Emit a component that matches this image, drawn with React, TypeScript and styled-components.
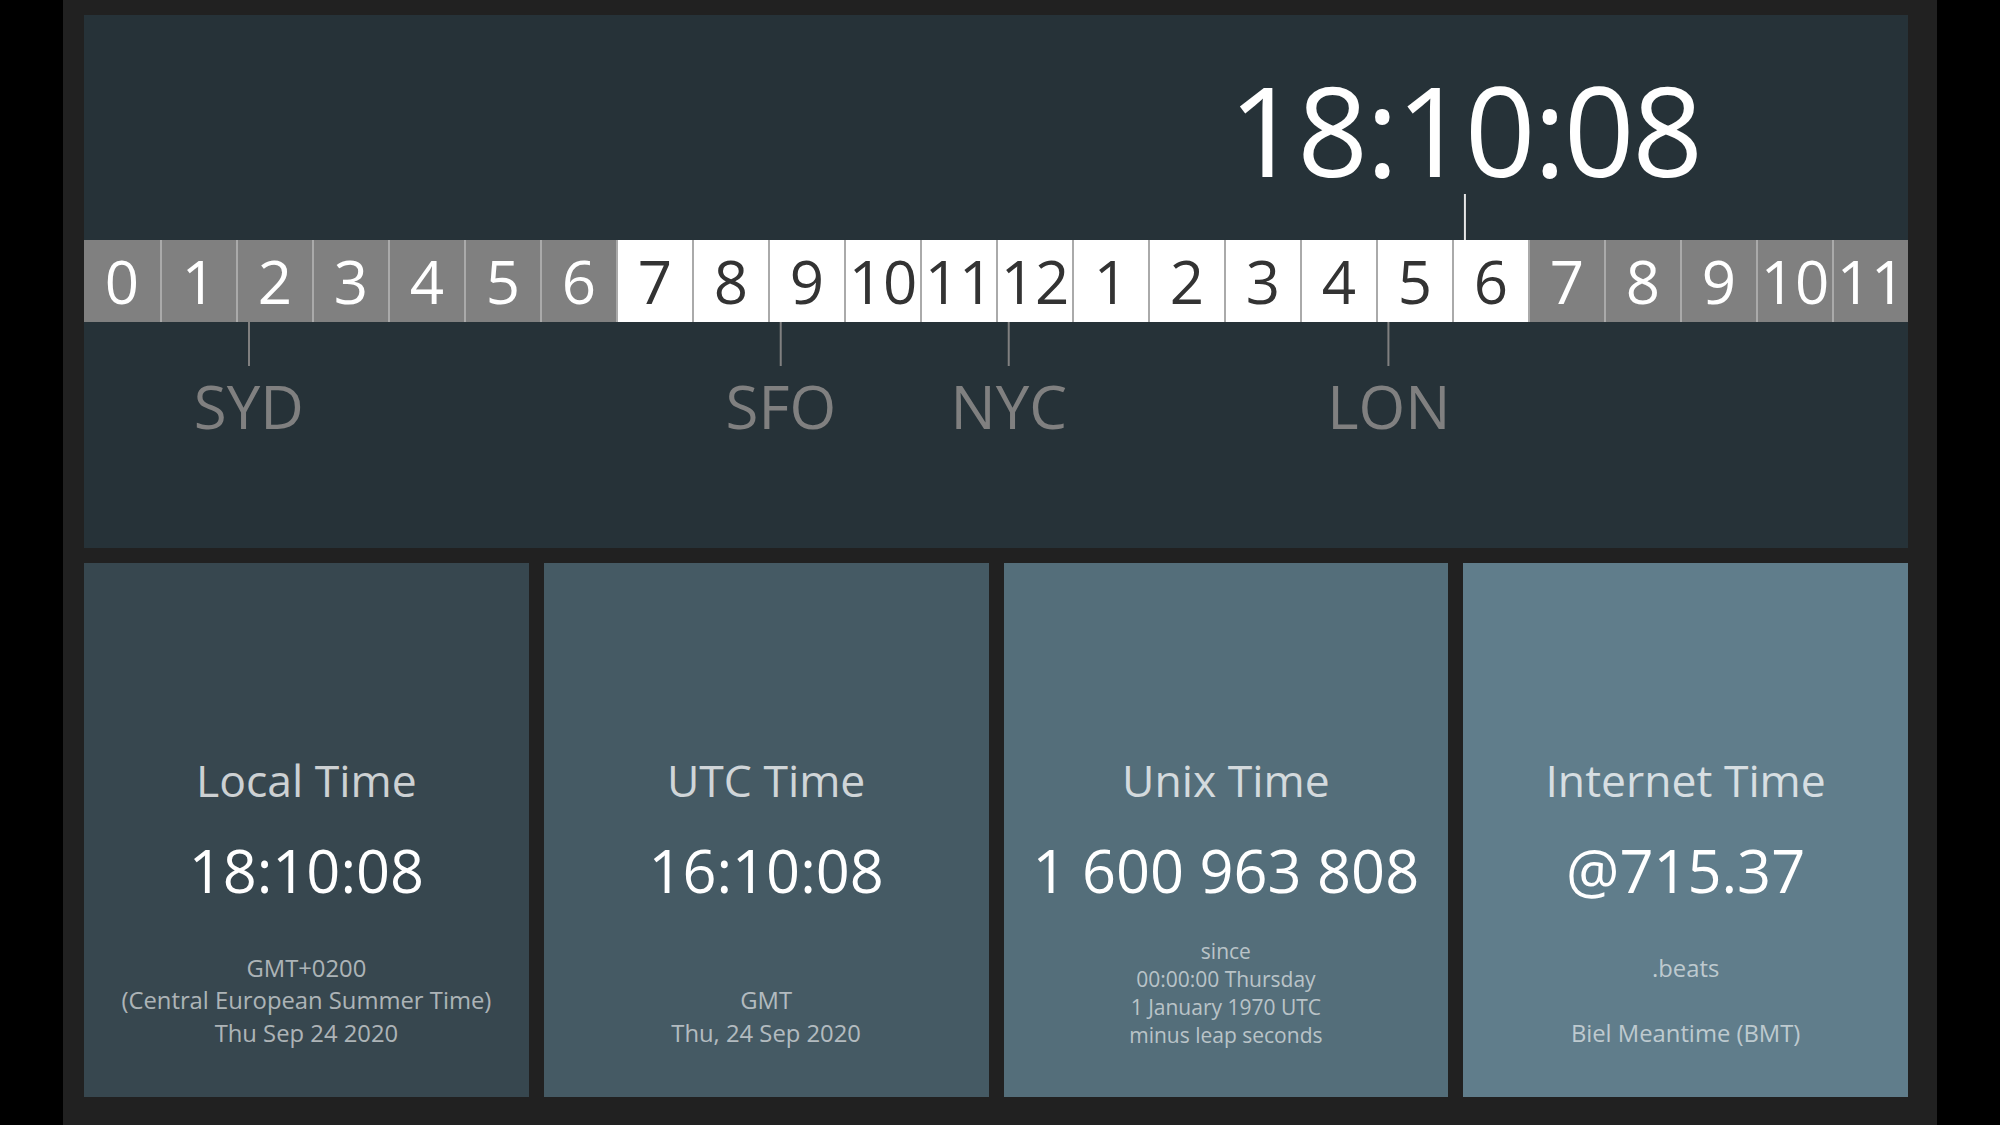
import React from 'react'
import styled, { createGlobalStyle } from 'styled-components'

const GlobalStyle = createGlobalStyle`
  html, body {
    margin: 0;
    padding: 0;
    background: #000;
  }
  body {
    font-family: 'Open Sans', 'Noto Sans', sans-serif;
    -webkit-font-smoothing: antialiased;
  }
`

const Frame = styled.main`
  box-sizing: border-box;
  width: 1874px;
  height: 1125px;
  margin-left: 63px;
  padding: 15px 29px 28px 21px;
  background: #212121;
  display: grid;
  grid-template-rows: 533px 1fr;
  row-gap: 15px;
`

const Timeline = styled.section`
  background: #263238;
  display: grid;
  grid-template-rows: 225px 82px 1fr;
`

const Lane = styled.div`
  position: relative;
`

const HourBar = styled.div`
  display: grid;
  grid-template-columns: repeat(24, 1fr);
`

const Hour = styled.div<{ $day: boolean }>`
  box-sizing: border-box;
  display: flex;
  align-items: center;
  justify-content: center;
  background: ${({ $day }) => ($day ? '#ffffff' : '#808080')};
  color: ${({ $day }) => ($day ? '#333333' : '#ffffff')};
  font-size: 60px;
  line-height: 1;

  & + & {
    border-left: 2px solid #aaaaaa;
  }
`

const NowMarker = styled.div`
  position: absolute;
  bottom: 0;
  transform: translateX(-50%);
  display: flex;
  flex-direction: column;
  align-items: center;
`

const NowTime = styled.div`
  font-size: 124px;
  line-height: 1;
  letter-spacing: -2.3px;
  color: #ffffff;
  margin-bottom: 3px;
  white-space: nowrap;
`

const NowTick = styled.div`
  width: 2px;
  height: 46px;
  background: #e6e6e6;
`

const CityPin = styled.div`
  position: absolute;
  top: 0;
  transform: translateX(-50%);
  display: flex;
  flex-direction: column;
  align-items: center;
`

const CityTick = styled.div`
  width: 2px;
  height: 44px;
  background: #808080;
`

const CityName = styled.div`
  margin-top: 10px;
  font-size: 60px;
  line-height: 1;
  color: #808080;
`

const Cards = styled.section`
  display: grid;
  grid-template-columns: repeat(4, 1fr);
  column-gap: 15px;
`

const Card = styled.div<{ $bg: string }>`
  background: ${({ $bg }) => $bg};
  display: flex;
  flex-direction: column;
  align-items: center;
  justify-content: flex-end;
  padding-bottom: 48px;
  text-align: center;
`

const CardTitle = styled.div`
  font-size: 44.5px;
  line-height: 54px;
  color: rgba(255, 255, 255, 0.75);
`

const CardValue = styled.div`
  margin-top: 26px;
  font-size: 59.5px;
  line-height: 73px;
  color: #ffffff;
  white-space: nowrap;
`

const CardNote = styled.div<{ $small?: boolean }>`
  margin-top: 31px;
  height: 112px;
  display: flex;
  flex-direction: column;
  justify-content: flex-end;
  font-size: ${({ $small }) => ($small ? 21 : 23.8)}px;
  line-height: ${({ $small }) => ($small ? 28 : 32.5)}px;
  color: rgba(255, 255, 255, 0.6);
`

// frozen moment of the screenshot
const UTC = { h: 16, m: 10, s: 8 }
const LOCAL_OFFSET = 2

const cities = [
  { name: 'SYD', offset: 10 },
  { name: 'SFO', offset: -7 },
  { name: 'NYC', offset: -4 },
  { name: 'LON', offset: 1 },
]

const dayFraction = (offset: number) => {
  const h = (UTC.h + offset + 24) % 24
  return (h + UTC.m / 60 + UTC.s / 3600) / 24
}

const hourLabel = (i: number) => (i > 12 ? i - 12 : i)

const cards = [
  {
    bg: '#37474f',
    title: 'Local Time',
    value: '18:10:08',
    note: ['GMT+0200', '(Central European Summer Time)', 'Thu Sep 24 2020'],
  },
  {
    bg: '#455a64',
    title: 'UTC Time',
    value: '16:10:08',
    note: ['GMT', 'Thu, 24 Sep 2020'],
  },
  {
    bg: '#546e7a',
    title: 'Unix Time',
    value: '1 600 963 808',
    note: ['since', '00:00:00 Thursday', '1 January 1970 UTC', 'minus leap seconds'],
    small: true,
  },
  {
    bg: '#607d8b',
    title: 'Internet Time',
    value: '@715.37',
    note: ['.beats', '\u00a0', 'Biel Meantime (BMT)'],
  },
]

export default function App() {
  const now = dayFraction(LOCAL_OFFSET)

  return (
    <>
      <GlobalStyle />
      <Frame>
        <Timeline>
          <Lane>
            <NowMarker style={{ left: `${now * 100}%` }}>
              <NowTime>18:10:08</NowTime>
              <NowTick />
            </NowMarker>
          </Lane>
          <HourBar>
            {Array.from({ length: 24 }, (_, i) => (
              <Hour key={i} $day={i >= 7 && i <= 18}>
                {hourLabel(i)}
              </Hour>
            ))}
          </HourBar>
          <Lane>
            {cities.map(c => (
              <CityPin key={c.name} style={{ left: `${dayFraction(c.offset) * 100}%` }}>
                <CityTick />
                <CityName>{c.name}</CityName>
              </CityPin>
            ))}
          </Lane>
        </Timeline>
        <Cards>
          {cards.map(c => (
            <Card key={c.title} $bg={c.bg}>
              <CardTitle>{c.title}</CardTitle>
              <CardValue>{c.value}</CardValue>
              <CardNote $small={c.small}>
                {c.note.map((line, i) => (
                  <div key={i}>{line}</div>
                ))}
              </CardNote>
            </Card>
          ))}
        </Cards>
      </Frame>
    </>
  )
}
